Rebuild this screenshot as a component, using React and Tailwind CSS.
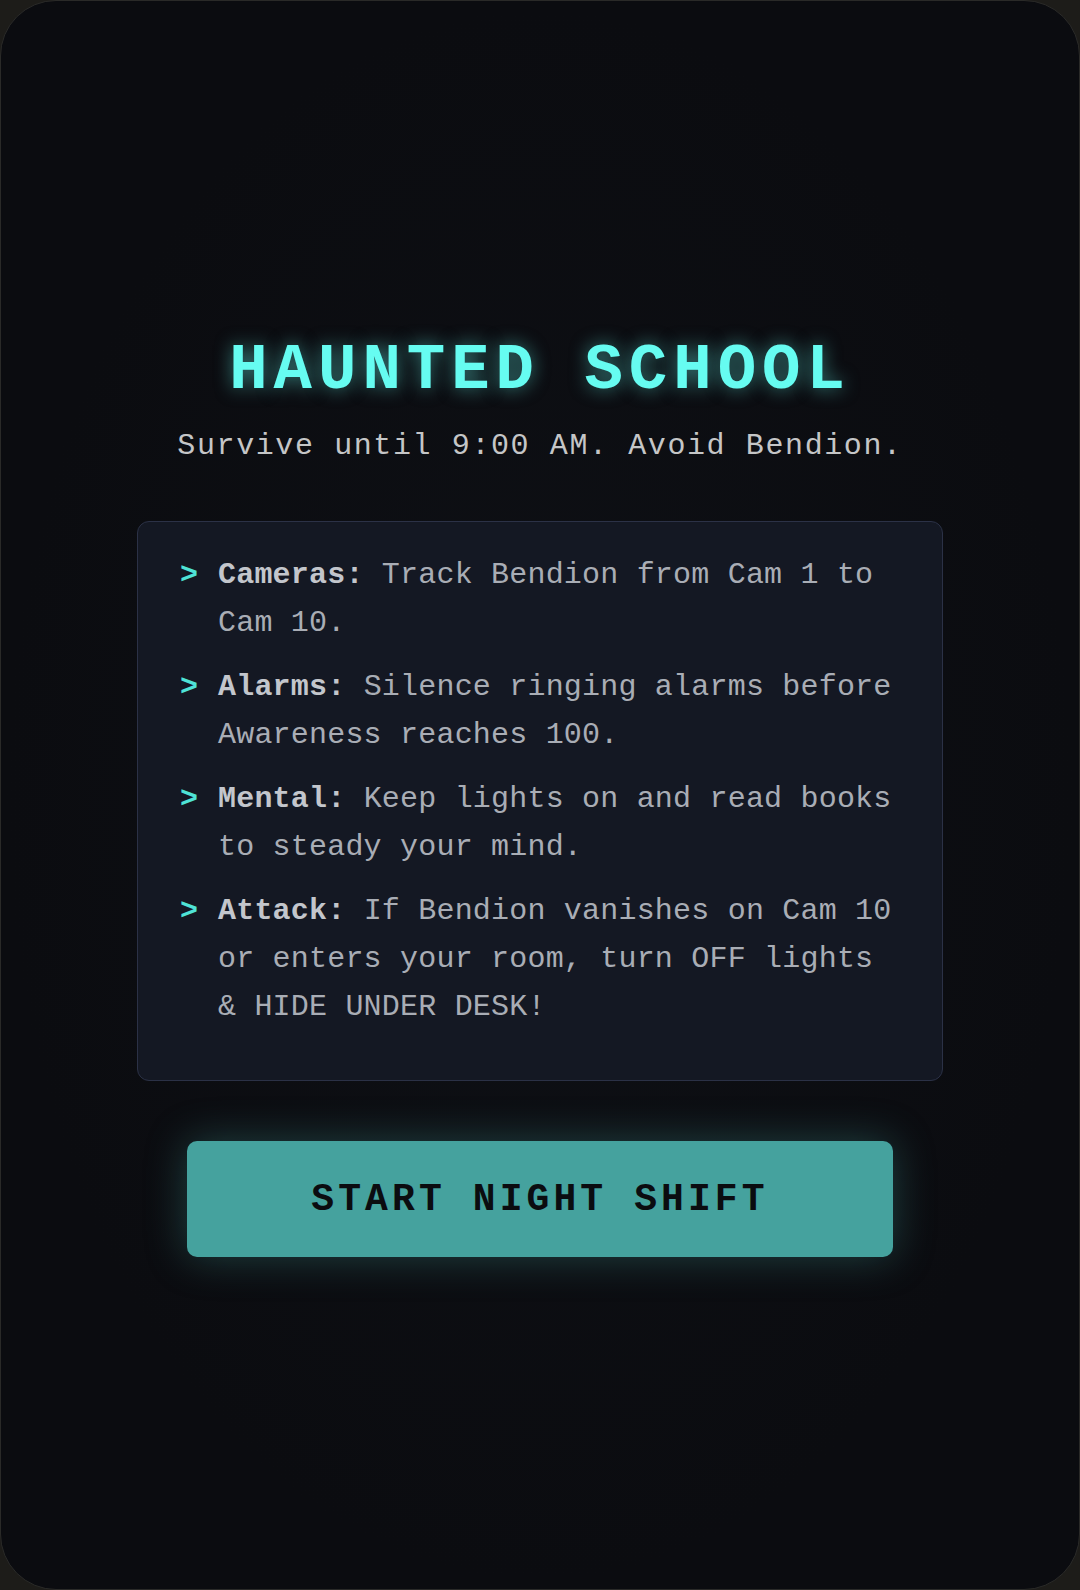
import React from "react";

const items = [
  { label: "Cameras:", text: "Track Bendion from Cam 1 to Cam 10." },
  { label: "Alarms:", text: "Silence ringing alarms before Awareness reaches 100." },
  { label: "Mental:", text: "Keep lights on and read books to steady your mind." },
  { label: "Attack:", text: "If Bendion vanishes on Cam 10 or enters your room, turn OFF lights & HIDE UNDER DESK!" },
];

export default function App() {
  return (
    <div className="w-[1080px] h-[1590px] bg-[#1d1c19] font-['Liberation_Mono',monospace]">
      <div className="w-full h-full rounded-[56px] border border-[#2a2a28] bg-[radial-gradient(ellipse_at_center,#0e1015_0%,#0b0c10_70%)] flex flex-col items-center pt-[338px]">
        <h1 className="text-[64px] leading-[64px] font-bold tracking-[6px] text-[#66fcf1] [text-shadow:0_0_18px_rgba(102,252,241,0.5)]">
          HAUNTED SCHOOL
        </h1>
        <p className="mt-[23px] text-[30px] leading-[40px] tracking-[1.6px] text-[#c5c6c7]">
          Survive until 9:00 AM. Avoid Bendion.
        </p>
        <div className="mt-[55px] w-[806px] rounded-[12px] border border-[#2b3146] bg-[#141823] pl-[42px] pr-[30px] pt-[29px] pb-[49px] flex flex-col gap-[16px]">
          {items.map((it) => (
            <div key={it.label} className="flex text-[30px] leading-[48px] tracking-[0.2px]">
              <span className="w-[38px] shrink-0 font-bold text-[#4fe3d6]">&gt;</span>
              <p className="w-[682px] text-[#a9adb5]">
                <span className="font-bold text-[#c3c6cc]">{it.label}</span> {it.text}
              </p>
            </div>
          ))}
        </div>
        <button className="mt-[60px] w-[706px] h-[116px] rounded-[10px] bg-[#45a29e] text-[#0b0c10] text-[38px] font-bold tracking-[4.1px] shadow-[0_0_40px_rgba(69,162,158,0.35)]">
          START NIGHT SHIFT
        </button>
      </div>
    </div>
  );
}
